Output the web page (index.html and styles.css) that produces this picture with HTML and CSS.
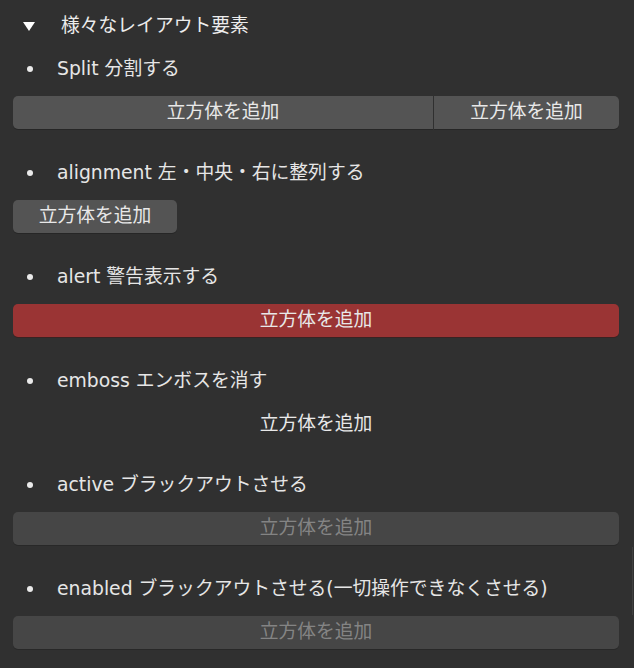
FILE: index.html
```html
<!DOCTYPE html>
<html lang="ja">
<head>
<meta charset="utf-8">
<link rel="stylesheet" href="styles.css">
</head>
<body>
<div class="panel">
  <div class="header"><span class="tri"></span><span class="title">様々なレイアウト要素</span></div>

  <div class="label"><span class="dot"></span><span>Split 分割する</span></div>
  <div class="split">
    <div class="btn left">立方体を追加</div>
    <div class="btn right">立方体を追加</div>
  </div>

  <div class="label"><span class="dot"></span><span>alignment 左・中央・右に整列する</span></div>
  <div class="row"><div class="btn small">立方体を追加</div></div>

  <div class="label"><span class="dot"></span><span>alert 警告表示する</span></div>
  <div class="btn alert">立方体を追加</div>

  <div class="label"><span class="dot"></span><span>emboss エンボスを消す</span></div>
  <div class="btn flat">立方体を追加</div>

  <div class="label"><span class="dot"></span><span>active ブラックアウトさせる</span></div>
  <div class="btn off">立方体を追加</div>

  <div class="label"><span class="dot"></span><span>enabled ブラックアウトさせる(一切操作できなくさせる)</span></div>
  <div class="btn off">立方体を追加</div>
</div>
<div class="scroll"></div>
</body>
</html>
```
FILE: styles.css
```css
html, body {
  margin: 0;
  padding: 0;
  background: #303030;
  width: 634px;
  height: 668px;
  overflow: hidden;
}
body {
  font-family: "DejaVu Sans", "Noto Sans CJK JP", sans-serif;
  font-size: 18.8px;
  line-height: 1.2;
  color: #e6e6e6;
  position: relative;
}
.panel {
  padding: 9px 15px 0 13px;
  display: flex;
  flex-direction: column;
}
.header {
  height: 34px;
  display: flex;
  align-items: center;
  margin-bottom: 9px;
}
.tri {
  width: 0;
  height: 0;
  border-left: 6.5px solid transparent;
  border-right: 6.5px solid transparent;
  border-top: 9px solid #ffffff;
  margin-left: 10px;
  margin-right: 26px;
}
.title { color: #ececec; }
.label {
  height: 34px;
  display: flex;
  align-items: center;
  margin-bottom: 10px;
}
.dot {
  width: 6px;
  height: 6px;
  border-radius: 50%;
  background: #eaeaea;
  margin-left: 14px;
  margin-right: 24px;
}
.btn {
  height: 33px;
  box-sizing: border-box;
  border-radius: 5px;
  background: #545454;
  color: #e8e8e8;
  display: flex;
  align-items: center;
  justify-content: center;
  box-shadow: 0 1px 0 #262626;
  margin-bottom: 27px;
  white-space: nowrap;
}
.split {
  display: flex;
  margin-bottom: 27px;
}
.split .btn { margin-bottom: 0; }
.split .left {
  width: 420px;
  border-radius: 5px 0 0 5px;
}
.split .right {
  flex: 1;
  margin-left: 1px;
  border-radius: 0 5px 5px 0;
}
.row { display: flex; }
.small { width: 164px; }
.alert { background: #9a3434; box-shadow: 0 1px 0 #3a2222; }
.flat { background: transparent; box-shadow: none; }
.off { background: #464646; color: #848484; box-shadow: 0 1px 0 #282828; }
.scroll {
  position: absolute;
  right: 1px;
  top: 547px;
  width: 1px;
  height: 68px;
  background: #404040;
}
```
